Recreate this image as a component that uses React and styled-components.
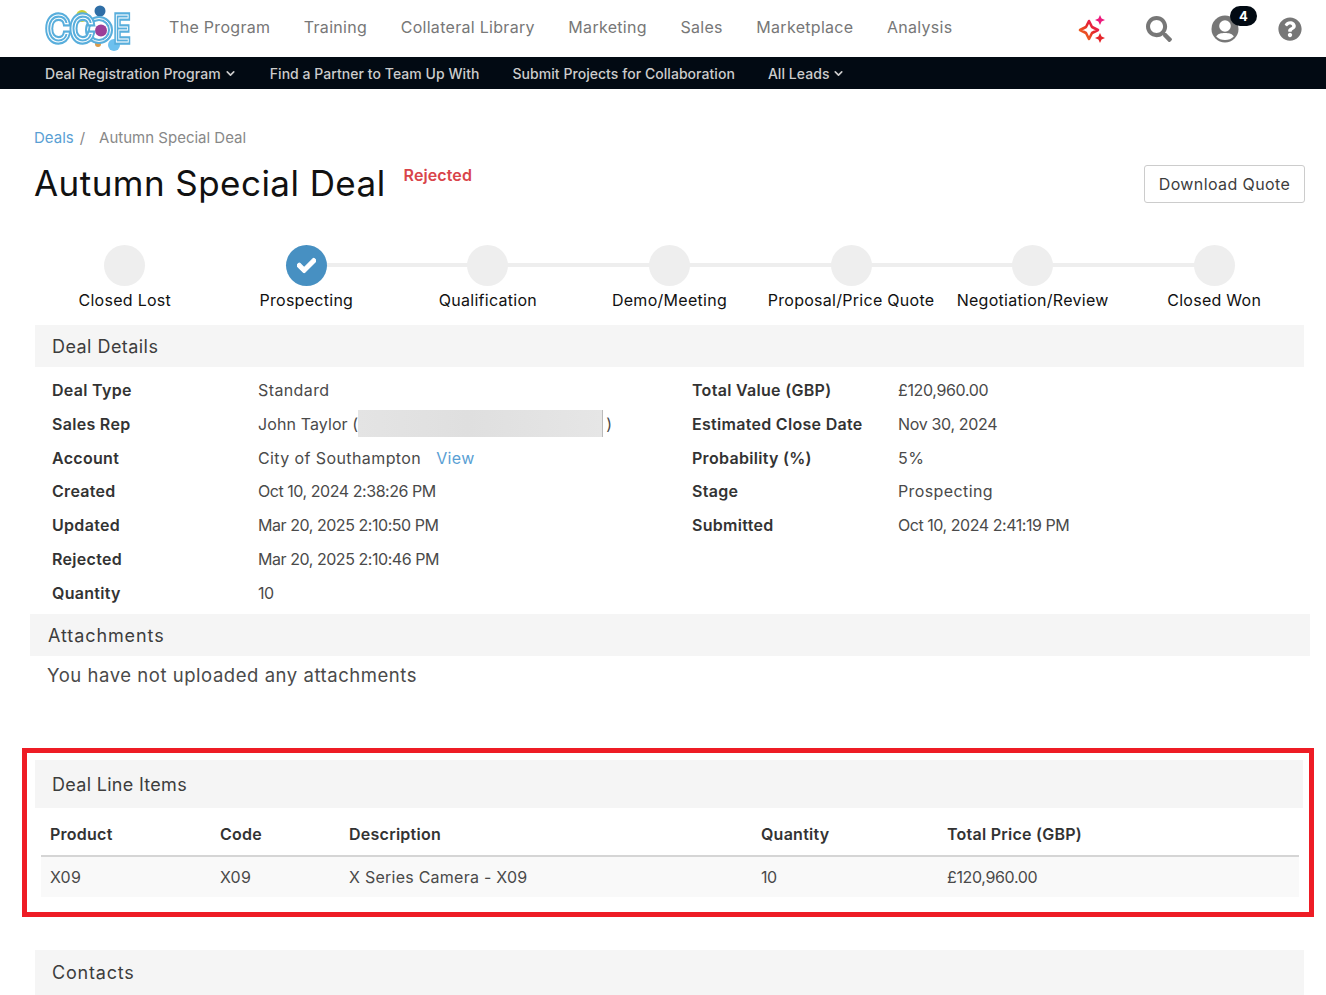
import React from "react"
import styled, { createGlobalStyle } from "styled-components"
import { FaSearch, FaQuestionCircle, FaCheck } from "react-icons/fa"
import { LuChevronDown } from "react-icons/lu"

const Global = createGlobalStyle`
  html, body { margin: 0; padding: 0; background: #fff; }
  body { font-family: Inter, "Noto Sans", "Liberation Sans", sans-serif; color: #3d3d3d; }
  * { box-sizing: border-box; }
`

const Page = styled.div`
  width: 1326px; height: 995px; overflow: hidden;
`

const TopBar = styled.header`
  height: 57px; display: flex; align-items: center;
  padding: 0 24px 0 44px;
`
const LogoMark = styled.svg`
  flex: none; filter: blur(0.4px);
`
const MainNav = styled.nav`
  display: flex; gap: 33.5px; margin: 0 0 3px 29px; flex: 1;
  a { font-size: 16px; color: #777; letter-spacing: 0.3px; }
`
const IconTray = styled.div`
  display: flex; align-items: center; color: #777;
`
const TrayIcon = styled.div`
  position: relative; display: flex; align-items: center; justify-content: center;
  width: ${props => props.$w}px; margin-left: ${props => props.$gap}px;
`
const Badge = styled.span`
  position: absolute; top: -9px; left: 19px;
  width: 27px; height: 20px; border-radius: 10px;
  background: #020a13; color: #fff;
  font-size: 13px; font-weight: 700;
  display: flex; align-items: center; justify-content: center;
`

const SubBar = styled.nav`
  height: 32px; background: #020a13; display: flex; align-items: center;
  padding-left: 45px; gap: 33px;
  a { display: flex; align-items: center; gap: 3px; font-size: 14px; font-weight: 500; color: #ccc; letter-spacing: 0.05px; }
  svg { stroke-width: 3; }
`

const Content = styled.main`
  padding: 39px 21px 0 34px;
`
const Crumbs = styled.div`
  display: flex; font-size: 15px; line-height: 20px; color: #888;
  a { color: #5a9fd4; }
  span { margin: 0 14px 0 6px; }
`
const TitleRow = styled.div`
  display: flex; align-items: flex-start; margin-top: 6px; height: 61px;
  h1 { margin: 6px 0 0; font-size: 35px; line-height: 46px; font-weight: 400; color: #111; letter-spacing: 0.45px; }
`
const Status = styled.div`
  margin: 10px 0 0 18px; font-size: 16px; font-weight: 600; color: #d9444a; line-height: 22px;
  letter-spacing: 0.1px; flex: 1;
`
const QuoteButton = styled.button`
  margin-top: 11px; width: 161px; height: 38px;
  font: inherit; font-size: 16px; color: #3d3d3d; letter-spacing: 0.4px;
  background: #fff; border: 1px solid #ccc; border-radius: 3px;
`

const Stepper = styled.ol`
  list-style: none; margin: 30px 0 0; padding: 0;
  display: grid; grid-template-columns: repeat(7, 1fr);
`
const Step = styled.li`
  position: relative; display: flex; flex-direction: column; align-items: center;
  font-size: 16px; line-height: 22px; color: #111; white-space: nowrap; letter-spacing: 0.28px;
  &::before {
    content: ""; display: ${props => (props.$first ? "none" : "block")};
    position: absolute; top: 18px; right: 50%; width: 100%; height: 4px; background: #eee;
  }
`
const Dot = styled.div`
  position: relative; z-index: 1; width: 41px; height: 41px; border-radius: 50%; margin-bottom: 3px;
  background: ${props => (props.$on ? "#4790c2" : "#eee")};
  color: #fff; display: flex; align-items: center; justify-content: center;
`

const SectionHead = styled.div`
  height: ${props => props.$h || 42}px; display: flex; align-items: center;
  margin: ${props => props.$top || 0}px ${props => (props.$wide ? -5 : 1)}px 0 ${props => (props.$wide ? -4 : 1)}px;
  padding-left: ${props => (props.$wide ? 18 : 17)}px; background: #f5f5f5; font-size: 18px; color: #3d3d3d;
  letter-spacing: ${props => props.$track || 0.45}px;
`
const Details = styled.div`
  display: grid; grid-template-columns: 640px 1fr; padding: 6px 0 0 18px; height: 247px;
`
const DetailCol = styled.dl`
  margin: 0;
`
const DetailRow = styled.div`
  display: grid; grid-template-columns: 206px 1fr; height: 33.85px; align-items: center; font-size: 16px;
  dt { font-weight: 600; color: #333; letter-spacing: 0.3px; }
  dd { margin: 0; color: #4a4a4a; display: flex; align-items: center; letter-spacing: 0.4px; }
  a { color: #5a9fd4; margin-left: 15px; }
`
const Num = styled.span`
  letter-spacing: ${props => props.$tight ?? -0.45}px;
`
const Redacted = styled.span`
  display: inline-block; width: 245px; height: 27px; margin: 0 3px 0 0;
  background: linear-gradient(90deg, #e4e4e4, #dfdfdf 45%, #e6e6e6);
  border-right: 1px solid #bbb;
`
const NoFiles = styled.p`
  margin: 7px 0 0 13px; font-size: 18.5px; line-height: 24px; color: #4a4a4a; height: 85px;
  letter-spacing: 0.54px;
`

const Highlight = styled.section`
  margin: 0 -9px 0 -12px; height: 169px; border: 5px solid #ee1c25; padding: 7px 5px 0 7px;
`
const Table = styled.table`
  width: 1258px; margin: 0 0 0 7px; border-collapse: collapse; font-size: 16px; table-layout: fixed;
  th { text-align: left; font-weight: 600; color: #333; height: 48px; padding: 5px 0 0 9px; border-bottom: 2px solid #d5d5d5; letter-spacing: 0.25px; }
  td { height: 41px; padding: 0 0 0 9px; background: #f9f9f9; color: #4a4a4a; letter-spacing: 0.25px; }
`

const Logo = () => (
  <LogoMark width="96" height="52" viewBox="0 0 96 52">
    <circle cx="38" cy="13" r="6" fill="#c8cf35" />
    <circle cx="56" cy="8" r="5.5" fill="#2f6ea6" />
    <circle cx="54" cy="41" r="3" fill="#d99a4a" />
    <circle cx="70" cy="42" r="6" fill="#6dc0ee" />
    <circle cx="55" cy="27" r="11.5" fill="#fff" stroke="#58aedc" strokeWidth="5" />
    <circle cx="55" cy="27" r="11.5" fill="none" stroke="#fff" strokeWidth="1" />
    <circle cx="57" cy="27.5" r="6" fill="#9b3f98" />
    <g fontFamily="Inter, sans-serif" fontSize="37" fill="none">
      <text x="2" y="39.5" stroke="#58aedc" strokeWidth="5.5" transform="scale(0.9 1)">CC</text>
      <text x="0" y="39.5" stroke="#58aedc" strokeWidth="5.5" transform="translate(70 0) scale(0.72 1)">E</text>
      <text x="2" y="39.5" stroke="#fff" strokeWidth="1.1" transform="scale(0.9 1)">CC</text>
      <text x="0" y="39.5" stroke="#fff" strokeWidth="1.1" transform="translate(70 0) scale(0.72 1)">E</text>
    </g>
  </LogoMark>
)

const Sparkles = () => (
  <svg width="30" height="30" viewBox="0 0 30 30">
    <defs>
      <linearGradient id="spark" x1="0" y1="1" x2="1" y2="0">
        <stop offset="0" stopColor="#f07a1e" />
        <stop offset="0.6" stopColor="#e5262b" />
        <stop offset="1" stopColor="#ec1a7c" />
      </linearGradient>
    </defs>
    <path d="M11 7 L14 13 L20 16 L14 19 L11 25 L8 19 L2 16 L8 13 Z" fill="none" stroke="url(#spark)" strokeWidth="2.6" strokeLinejoin="round" />
    <path d="M22 1 L23.6 4.4 L27 6 L23.6 7.6 L22 11 L20.4 7.6 L17 6 L20.4 4.4 Z" fill="#ec1a7c" />
    <path d="M22 19 L23.6 22.4 L27 24 L23.6 25.6 L22 29 L20.4 25.6 L17 24 L20.4 22.4 Z" fill="#e5262b" />
  </svg>
)

const UserIcon = () => (
  <svg width="28" height="28" viewBox="0 0 28 28">
    <circle cx="14" cy="14" r="13.5" fill="#777" />
    <circle cx="14" cy="11" r="5.8" fill="#fff" />
    <path d="M5.2 21.5 C7 18.5 10 18 14 18 C18 18 21 18.5 22.8 21.5 C20.5 24 17.5 25 14 25 C10.5 25 7.5 24 5.2 21.5 Z" fill="#fff" />
  </svg>
)

const steps = ["Closed Lost", "Prospecting", "Qualification", "Demo/Meeting", "Proposal/Price Quote", "Negotiation/Review", "Closed Won"]

const leftRows = [
  ["Deal Type", "Standard"],
  ["Sales Rep", <><Num $tight={0.1}>John Taylor (</Num><Redacted />)</>],
  ["Account", <>City of Southampton<a>View</a></>],
  ["Created", <Num>Oct 10, 2024 2:38:26 PM</Num>],
  ["Updated", <Num>Mar 20, 2025 2:10:50 PM</Num>],
  ["Rejected", <Num>Mar 20, 2025 2:10:46 PM</Num>],
  ["Quantity", <Num>10</Num>],
]
const rightRows = [
  ["Total Value (GBP)", <Num $tight={-0.36}>£120,960.00</Num>],
  ["Estimated Close Date", <Num $tight={-0.33}>Nov 30, 2024</Num>],
  ["Probability (%)", "5%"],
  ["Stage", "Prospecting"],
  ["Submitted", <Num>Oct 10, 2024 2:41:19 PM</Num>],
]

const DetailList = ({ rows }) => (
  <DetailCol>
    {rows.map(([label, value]) => (
      <DetailRow key={label}>
        <dt>{label}</dt>
        <dd>{value}</dd>
      </DetailRow>
    ))}
  </DetailCol>
)

export default function App() {
  return (
    <Page>
      <Global />
      <TopBar>
        <Logo />
        <MainNav>
          {["The Program", "Training", "Collateral Library", "Marketing", "Sales", "Marketplace", "Analysis"].map(n => (
            <a key={n}>{n}</a>
          ))}
        </MainNav>
        <IconTray>
          <TrayIcon $w={30}><Sparkles /></TrayIcon>
          <TrayIcon $w={28} $gap={37}><FaSearch size={26} /></TrayIcon>
          <TrayIcon $w={28} $gap={38}><UserIcon /><Badge>4</Badge></TrayIcon>
          <TrayIcon $w={24} $gap={39}><FaQuestionCircle size={24} /></TrayIcon>
        </IconTray>
      </TopBar>
      <SubBar>
        <a>Deal Registration Program<LuChevronDown size={13} /></a>
        <a>Find a Partner to Team Up With</a>
        <a>Submit Projects for Collaboration</a>
        <a>All Leads<LuChevronDown size={13} /></a>
      </SubBar>
      <Content>
        <Crumbs><a>Deals</a><span>/</span>Autumn Special Deal</Crumbs>
        <TitleRow>
          <h1>Autumn Special Deal</h1>
          <Status>Rejected</Status>
          <QuoteButton>Download Quote</QuoteButton>
        </TitleRow>
        <Stepper>
          {steps.map((s, i) => (
            <Step key={s} $first={i < 2}>
              <Dot $on={i === 1}>{i === 1 && <FaCheck size={19} stroke="currentColor" strokeWidth={30} />}</Dot>
              {s}
            </Step>
          ))}
        </Stepper>
        <SectionHead $top={14}>Deal Details</SectionHead>
        <Details>
          <DetailList rows={leftRows} />
          <DetailList rows={rightRows} />
        </Details>
        <SectionHead $wide $track={0.9}>Attachments</SectionHead>
        <NoFiles>You have not uploaded any attachments</NoFiles>
        <Highlight>
          <SectionHead $h={48} $track={0.3}>Deal Line Items</SectionHead>
          <Table>
            <colgroup>
              <col width="170" /><col width="129" /><col width="412" /><col width="186" /><col />
            </colgroup>
            <thead>
              <tr><th>Product</th><th>Code</th><th>Description</th><th>Quantity</th><th>Total Price (GBP)</th></tr>
            </thead>
            <tbody>
              <tr>
                <td>X09</td><td>X09</td><td>X Series Camera - X09</td><td><Num>10</Num></td>
                <td><Num $tight={-0.36}>£120,960.00</Num></td>
              </tr>
            </tbody>
          </Table>
        </Highlight>
        <SectionHead $h={45} $top={33} $track={0.8}>Contacts</SectionHead>
      </Content>
    </Page>
  )
}
